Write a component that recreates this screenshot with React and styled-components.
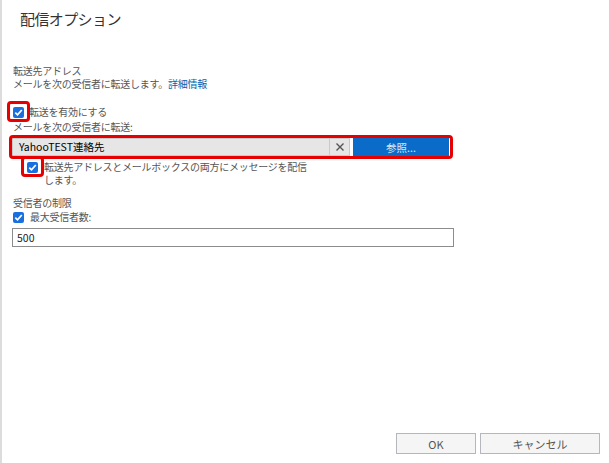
import React from "react";
import styled, { createGlobalStyle } from "styled-components";

const Global = createGlobalStyle`
  html, body {
    margin: 0;
    padding: 0;
    background: #fff;
  }
  body {
    font-family: "Noto Sans CJK JP", "Noto Sans", sans-serif;
  }
`;

const Page = styled.div`
  box-sizing: border-box;
  height: 463px;
  border-left: 2px solid #dcdcdc;
  display: flex;
  flex-direction: column;
`;

const Title = styled.h1`
  margin: 8px 0 0 18px;
  font-size: 15px;
  line-height: 22px;
  letter-spacing: -0.6px;
  font-weight: 400;
  color: #333;
`;

const Body = styled.div`
  padding-left: 11px;
  font-size: 10px;
  letter-spacing: -0.25px;
  color: #555;
`;

const Line = styled.div`
  line-height: 13px;
  margin-top: ${(p) => p.$top || 0}px;
`;

const Link = styled.a`
  color: #0063b1;
  text-decoration: none;
`;

const CheckRow = styled.label`
  display: flex;
  align-items: ${(p) => (p.$wrap ? "flex-start" : "center")};
  margin-top: ${(p) => p.$top || 0}px;
  margin-left: ${(p) => p.$indent || 0}px;
  min-height: 14px;
  line-height: ${(p) => (p.$wrap ? "12.5px" : "14px")};
`;

const BoxWrap = styled.span`
  position: relative;
  flex: none;
  width: 11px;
  height: 11px;
  margin-top: ${(p) => p.$shift || 0}px;
  margin-right: ${(p) => p.$gap || 5}px;
  &::after {
    content: "";
    display: ${(p) => (p.$marked ? "block" : "none")};
    position: absolute;
    top: -6px;
    left: -6px;
    right: -6px;
    bottom: -4px;
    border: 3px solid #e60000;
    border-radius: 4px;
  }
`;

const Box = styled.span`
  display: block;
  width: 11px;
  height: 11px;
  border-radius: 2px;
  background: #1a6fdf;
  svg {
    display: block;
  }
`;

const Check = ({ marked, shift, gap }) => (
  <BoxWrap $marked={marked} $shift={shift} $gap={gap}>
    <Box>
      <svg width="11" height="11" viewBox="0 0 11 11">
        <path d="M2.3 5.6 L4.5 7.8 L8.8 3" fill="none" stroke="#fff" strokeWidth="1.7" />
      </svg>
    </Box>
  </BoxWrap>
);

const PickRow = styled.div`
  position: relative;
  display: flex;
  margin: 5px 0 0 -1px;
  width: 437px;
  height: 18px;
  letter-spacing: 0;
  &::after {
    content: "";
    position: absolute;
    top: -3px;
    left: -3px;
    right: -4px;
    bottom: -3px;
    border: 3px solid #e60000;
    border-radius: 4px;
  }
`;

const Field = styled.div`
  flex: 1;
  box-sizing: border-box;
  background: #e6e6e6;
  border: 1px solid #c9c9c9;
  padding-left: 6px;
  line-height: 16px;
  font-size: 10.5px;
  font-weight: 400;
  color: #000;
`;

const Clear = styled.div`
  width: 20px;
  box-sizing: border-box;
  background: #e6e6e6;
  border: 1px solid #c9c9c9;
  border-left: none;
  display: flex;
  align-items: center;
  justify-content: center;
`;

const Browse = styled.button`
  width: 96px;
  margin-left: 3px;
  border: none;
  background: #0a6cc8;
  color: #dbe9f7;
  font-family: inherit;
  font-size: 10.5px;
  padding: 0;
`;

const Group = styled.div`
  margin-top: 10px;
`;

const TextBox = styled.div`
  box-sizing: border-box;
  margin: 4px 0 0 -1px;
  width: 442px;
  height: 19px;
  border: 1px solid #8c8c8c;
  padding-left: 4px;
  line-height: 17px;
  font-size: 10.5px;
  letter-spacing: 0;
  color: #222;
`;

const Footer = styled.div`
  margin-top: auto;
  display: flex;
  justify-content: flex-end;
  gap: 4px;
  padding: 0 9px 9px 0;
`;

const Button = styled.button`
  width: ${(p) => p.$w}px;
  height: 21px;
  box-sizing: border-box;
  border: 1px solid #b4b8bd;
  background: #f5f5f5;
  color: #555;
  font-family: inherit;
  font-size: 11px;
  padding: 0;
`;

export default function App() {
  return (
    <>
      <Global />
      <Page>
        <Title>配信オプション</Title>
        <Body>
          <Line $top={34}>転送先アドレス</Line>
          <Line>
            メールを次の受信者に転送します。<Link href="#">詳細情報</Link>
          </Line>
          <CheckRow $top={15}>
            <Check marked />
            転送を有効にする
          </CheckRow>
          <Line $top={1}>メールを次の受信者に転送:</Line>
          <PickRow>
            <Field>YahooTEST連絡先</Field>
            <Clear>
              <svg width="10" height="10" viewBox="0 0 10 10">
                <path d="M1.5 1.5 L8.5 8.5 M8.5 1.5 L1.5 8.5" stroke="#555" strokeWidth="1.4" />
              </svg>
            </Clear>
            <Browse>参照...</Browse>
          </PickRow>
          <CheckRow $top={5} $indent={14} $wrap>
            <Check marked shift={1} gap={6} />
            <span>
              転送先アドレスとメールボックスの両方にメッセージを配信
              <br />
              します。
            </span>
          </CheckRow>
          <Group>
            <Line>受信者の制限</Line>
            <CheckRow $top={1}>
              <Check gap={6} />
              最大受信者数:
            </CheckRow>
            <TextBox>500</TextBox>
          </Group>
        </Body>
        <Footer>
          <Button $w={80}>OK</Button>
          <Button $w={120}>キャンセル</Button>
        </Footer>
      </Page>
    </>
  );
}
